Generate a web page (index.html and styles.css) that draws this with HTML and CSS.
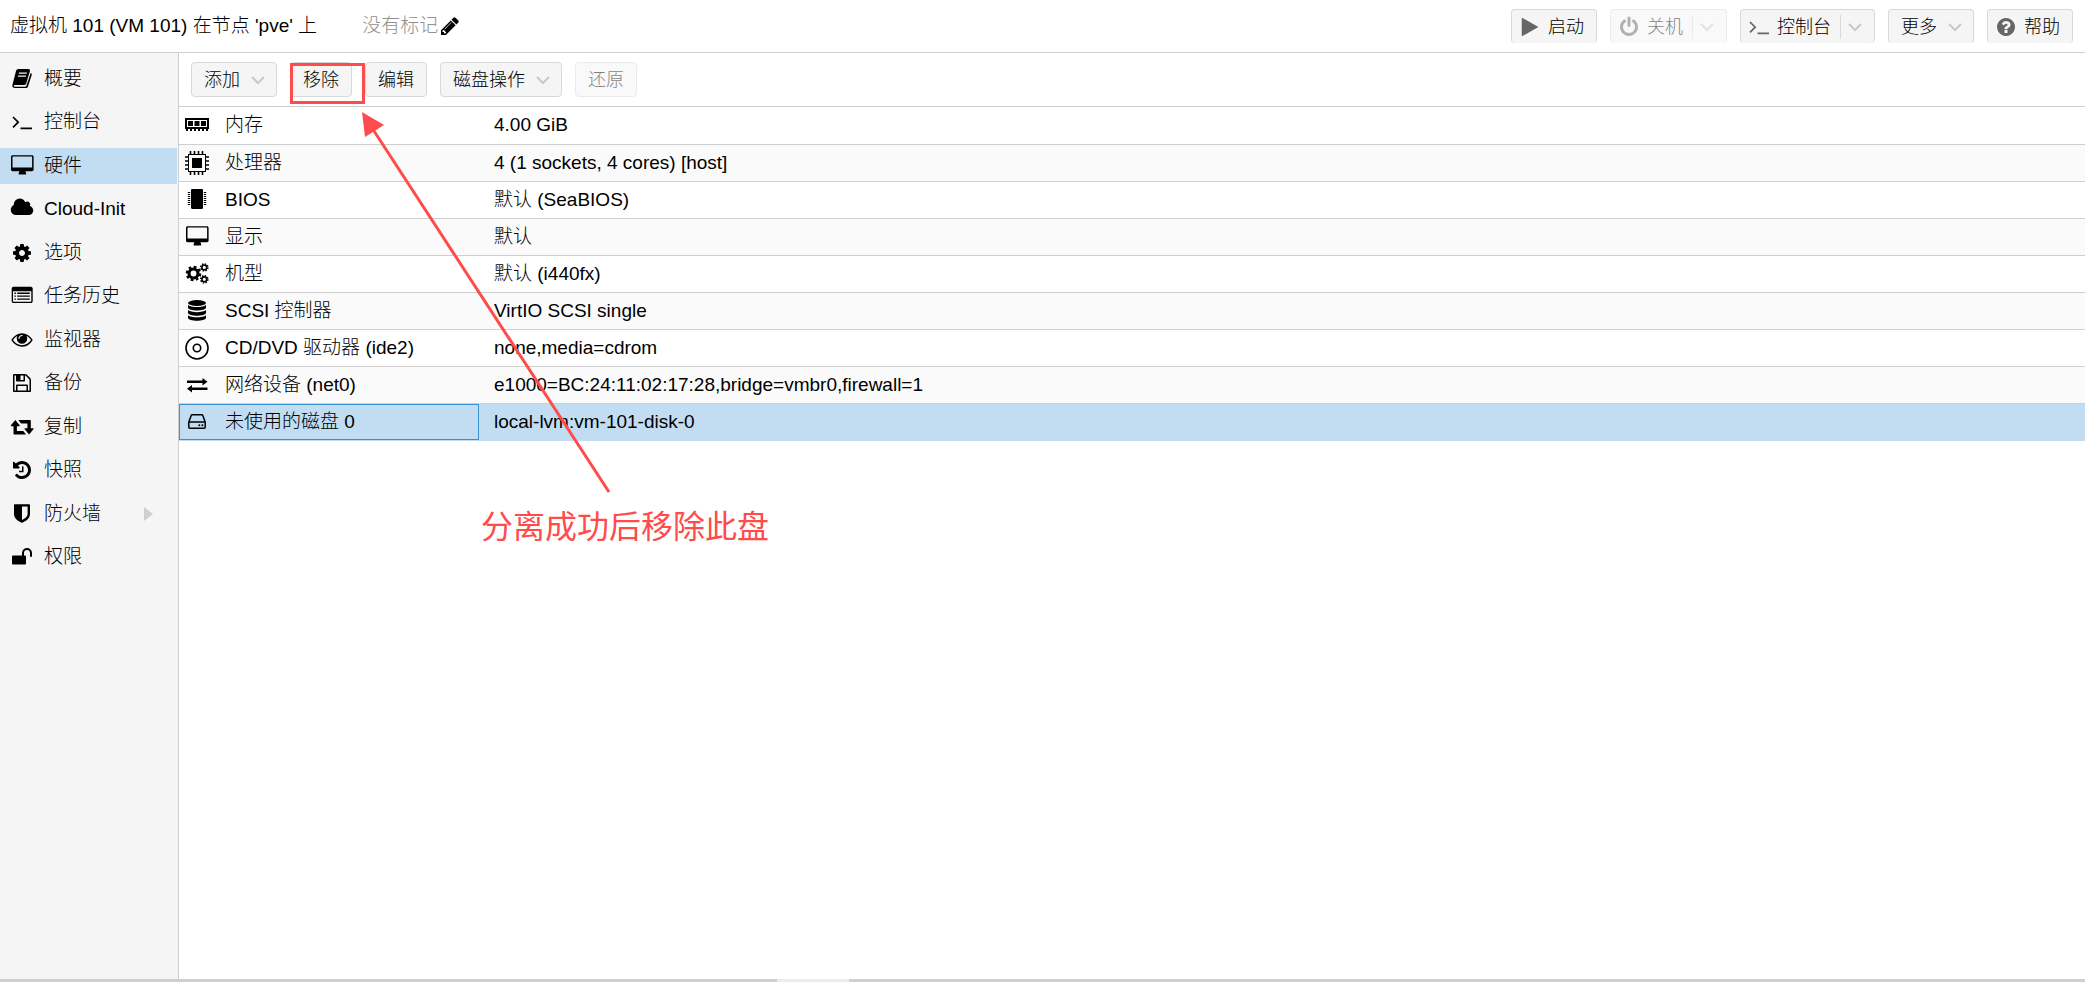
FILE: index.html
```
<!DOCTYPE html>
<html lang="zh-CN">
  <head>
    <meta charset="UTF-8" />
    <meta name="viewport" content="width=device-width, initial-scale=1.0" />
    <title>虚拟机 101 - 硬件</title>
    <link rel="stylesheet" href="styles.css">
  </head>
  <body>
    <svg class="sprite" aria-hidden="true">
      <symbol id="i-pencil" viewBox="-128 -128 2048 2048"><path d="M491 1536l91-91-235-235-91 91v107h128v128h107zm523-928q0-22-22-22-10 0-17 7l-542 542q-7 7-7 17 0 22 22 22 10 0 17-7l542-542q7-7 7-17zm-54-192l416 416-832 832h-416v-416zm683 96q0 53-37 90l-166 166-416-416 166-165q36-38 90-38 53 0 91 38l235 234q37 39 37 91z"/></symbol>
      <symbol id="i-play" viewBox="-128 -128 2048 2048"><path d="M1576 927l-1328 738q-23 13-39.5 3t-16.500-36v-1472q0-26 16.500-36t39.500 3l1328 738q23 13 23 31t-23 31z"/></symbol>
      <symbol id="i-power" viewBox="-128 -128 2048 2048"><path d="M1664 896q0 156-61 298t-164 245-245 164-298 61-298-61-245-164-164-245-61-298q0-182 80.500-343t226.500-270q43-32 95.500-25t83.500 50q32 42 24.500 94.500t-49.500 84.500q-98 74-151.500 181t-53.500 228q0 104 40.500 198.500t109.500 163.500 163.500 109.500 198.500 40.500 198.500-40.500 163.500-109.500 109.500-163.500 40.500-198.500q0-121-53.500-228t-151.500-181q-42-32-49.500-84.500t24.500-94.500q31-43 84-50t95 25q146 109 226.500 270t80.500 343zm-640-768v640q0 52-38 90t-90 38-90-38-38-90v-640q0-52 38-90t90-38 90 38 38 90z"/></symbol>
      <symbol id="i-help" viewBox="-128 -128 2048 2048"><path d="M1024 1376v-192q0-14-9-23t-23-9h-192q-14 0-23 9t-9 23v192q0 14 9 23t23 9h192q14 0 23-9t9-23zm256-672q0-88-55.500-163t-138.500-116-170-41q-243 0-371 213-15 24 8 42l132 100q7 6 19 6 16 0 25-12 53-68 86-92 34-24 86-24 48 0 85.500 26t37.500 59q0 38-20 61t-68 45q-63 28-115.500 86.500t-52.500 125.500v36q0 14 9 23t23 9h192q14 0 23-9t9-23q0-19 21.500-49.500t54.500-49.500q32-18 49-28.500t46-35 44.500-48 28-60.500 12.500-81zm384 192q0 209-103 385.500t-279.500 279.500-385.500 103-385.500-103-279.500-279.500-103-385.500 103-385.500 279.500-279.500 385.500-103 385.500 103 279.500 279.500 103 385.500z"/></symbol>
      <symbol id="i-terminal" viewBox="0 0 24 24"><path d="M3 7l5.200 5.200L3 17.400M10.500 18.300h11.500" fill="none" stroke="currentColor" stroke-width="1.700"/></symbol>
      <symbol id="i-book" viewBox="0 0 24 24"><path fill-rule="evenodd" d="M8.500 2h9.800c1.300 0 2 .9 1.600 2.200L16.200 16.400c-.4 1.200-1.200 1.700-2.400 1.700H5c-.9 0-1.300.5-1 1.100.2.400.6.600 1.200.600h9.700c.7 0 1.300-.4 1.500-1.100L20.700 6c.9.400 1.300 1.100 1 2L18 19.500c-.3 1-1.200 1.600-2.300 1.600H5c-1.700 0-3-1.500-2.600-3.100L6 4c.4-1.300 1.300-2 2.500-2zM9 5.600l-.4 1.200h8l.4-1.200zM8.200 8.500l-.4 1.200h8l.4-1.200z"/></symbol>
      <symbol id="i-desktop" viewBox="0 0 24 24"><path fill-rule="evenodd" d="M2.600 1.200h19.400c.9 0 1.600.7 1.600 1.600v12.800c0 .9-.7 1.600-1.600 1.600h-6.500c0 1.300.7 1.500.7 2.500 0 .5-.4.900-.9.900H9.500c-.5 0-.9-.4-.9-.9 0-1 .7-1.200.7-2.500H2.600c-.9 0-1.600-.7-1.600-1.600V2.800c0-.9.7-1.600 1.600-1.600zM2.500 3v10.400h19.600V3a.4.4 0 0 0-.4-.4H2.900a.4.4 0 0 0-.4.4z"/></symbol>
      <symbol id="i-cloud" viewBox="0 0 2048 2048"><path d="M1984 1152q0 159-112.500 271.500t-271.500 112.500h-1088q-185 0-316.500-131.500t-131.500-316.500q0-132 71-241.500t187-163.500q-2-28-2-43 0-212 150-362t362-150q158 0 286.500 88t187.500 230q70-62 166-62 106 0 181 75t75 181q0 75-41 138 129 30 213 134.500t84 239.500z"/></symbol>
      <symbol id="i-cog" viewBox="-128 -128 2048 2048"><path d="M1152 896q0-106-75-181t-181-75-181 75-75 181 75 181 181 75 181-75 75-181zm512-109v222q0 12-8 23t-20 13l-185 28q-19 54-39 91 35 50 107 138 10 12 10 25t-9 23q-27 37-99 108t-94 71q-12 0-26-9l-138-108q-44 23-91 38-16 136-29 186-7 28-36 28h-222q-14 0-24.500-8.500t-11.500-21.500l-28-184q-49-16-90-37l-141 107q-10 9-25 9-14 0-25-11-126-114-165-168-7-10-7-23 0-12 8-23 15-21 51-66.500t54-70.500q-27-50-41-99l-183-27q-13-2-21-12.500t-8-23.500v-222q0-12 8-23t19-13l186-28q14-46 39-92-40-57-107-138-10-12-10-24 0-10 9-23 26-36 98.500-107.500t94.500-71.500q13 0 26 10l138 107q44-23 91-38 16-136 29-186 7-28 36-28h222q14 0 24.500 8.500t11.500 21.500l28 184q49 16 90 37l142-107q9-9 24-9 13 0 25 10 129 119 165 170 7 8 7 22 0 12-8 23-15 21-51 66.500t-54 70.500q26 50 41 98l183 28q13 2 21 12.500t8 23.500z"/></symbol>
      <symbol id="i-list" viewBox="0 0 24 24"><path fill-rule="evenodd" d="M3.600 2.700h17.200c1 0 1.900.8 1.900 1.900v12.600c0 1-.8 1.800-1.900 1.800H3.600c-1 0-1.900-.8-1.900-1.800V4.600c0-1.100.8-1.900 1.900-1.900zM3 7.300v9.800c0 .4.300.6.600.6h17.100c.4 0 .6-.3.600-.6V7.300zM4.400 8.600h1.500v1.300H4.400zm2.800 0h12.600v1.300H7.200zM4.400 11.500h1.500v1.300H4.400zm2.800 0h12.600v1.300H7.200zM4.400 14.400h1.500v1.300H4.400zm2.800 0h12.600v1.300H7.200z"/></symbol>
      <symbol id="i-eye" viewBox="-128 -64 2048 2048"><path d="M1664 960q-152-236-381-353 61 104 61 225 0 185-131.500 316.500t-316.500 131.500-316.500-131.500-131.500-316.500q0-121 61-225-229 117-381 353 133 205 333.500 326.500t434.500 121.500 434.500-121.500 333.500-326.500zm-720-384q0-20-14-34t-34-14q-125 0-214.500 89.500t-89.500 214.500q0 20 14 34t34 14 34-14 14-34q0-86 61-147t147-61q20 0 34-14t14-34zm848 384q0 34-20 69-140 230-376.500 368.500t-499.500 138.500-499.500-139-376.500-368q-20-35-20-69t20-69q140-229 376.500-368t499.500-139 499.500 139 376.500 368q20 35 20 69z"/></symbol>
      <symbol id="i-save" viewBox="-128 -128 2048 2048"><path d="M512 1536h768v-384h-768v384zm896 0h128v-896q0-14-10-38.500t-20-34.500l-281-281q-10-10-34-20t-39-10v416q0 40-28 68t-68 28h-576q-40 0-68-28t-28-68v-416h-128v1280h128v-416q0-40 28-68t68-28h832q40 0 68 28t28 68v416zm-384-928v-320q0-13-9.500-22.500t-22.500-9.500h-192q-13 0-22.500 9.500t-9.500 22.500v320q0 13 9.500 22.500t22.500 9.500h192q13 0 22.500-9.500t9.500-22.500zm640 32v928q0 40-28 68t-68 28h-1344q-40 0-68-28t-28-68v-1344q0-40 28-68t68-28h928q40 0 88 20t76 48l280 280q28 28 48 76t20 88z"/></symbol>
      <symbol id="i-retweet" viewBox="0 0 24 24"><path d="M5.300 5l4.400 5.300c.3.400.1.900-.4.900H6.900v4.900h6.300l2.500 3c.2.300 0 .5-.3.500H4.300c-.5 0-.8-.3-.8-.8v-7.600H1.300c-.5 0-.7-.5-.4-.9zM19.100 19.500l-4.400-5.300c-.3-.4-.1-.9.400-.9h2.300V8.400h-6.300l-2.500-3c-.2-.3 0-.5.300-.5h11.100c.5 0 .8.300.8.800v7.600H23c.5 0 .7.500.4.900z"/></symbol>
      <symbol id="i-history" viewBox="-128 -128 2048 2048"><path d="M1664 896q0 156-61 298t-164 245-245 164-298 61q-172 0-327-72.500t-264-204.500q-7-10-6.500-22.500t8.500-20.500l137-138q10-9 25-9 16 2 23 12 73 95 179 147t225 52q104 0 198.500-40.500t163.500-109.500 109.500-163.500 40.500-198.500-40.500-198.500-109.500-163.500-163.500-109.500-198.500-40.500q-98 0-188 35.500t-160 101.500l137 138q31 30 14 69-17 40-59 40h-448q-26 0-45-19t-19-45v-448q0-42 40-59 39-17 69 14l130 129q107-101 244.500-156.500t284.500-55.500q156 0 298 61t245 164 164 245 61 298zm-640-288v448q0 14-9 23t-23 9h-320q-14 0-23-9t-9-23v-64q0-14 9-23t23-9h224v-352q0-14 9-23t23-9h64q14 0 23 9t9 23z"/></symbol>
      <symbol id="i-shield" viewBox="0 0 24 24"><path fill-rule="evenodd" d="M4.800 2.200h14.400c.4 0 .8.400.8.800v9c0 4.600-4 7-7.700 8.700h-.6C8 19 4 16.600 4 12V3c0-.4.400-.8.800-.8zM12 4.500v13.400c3-1.500 5.600-3.300 5.600-6V4.500z"/></symbol>
      <symbol id="i-unlock" viewBox="0 0 24 24"><path d="M3.300 10.500h11.400c.8 0 1.300.5 1.300 1.300v6.400c0 .8-.5 1.300-1.300 1.300H3.300c-.8 0-1.300-.5-1.300-1.300v-6.400c0-.8.500-1.300 1.300-1.300z"/><path d="M13 11V8a4 4 0 0 1 8 0v3" fill="none" stroke="currentColor" stroke-width="2" stroke-linecap="round"/></symbol>
      <symbol id="i-memory" viewBox="0 0 24 24"><path fill-rule="evenodd" d="M0 5h24v11h-1v2h-2v-2h-2v2h-2v-2h-2v2h-2v-2h-2v2H9v-2H7v2H5v-2H3v2H1v-2H0zM2 7v7h20V7zM3 8h5v5H3zm6.500 0h5v5h-5zm6.500 0h5v5h-5z"/></symbol>
      <symbol id="i-cpu" viewBox="0 0 24 24"><path fill-rule="evenodd" d="M3 3h18v18H3zM4 4v16h16V4zM7 7h10v10H7z"/><path d="M5.500 0v3M9.500 0v3M13.500 0v3M17.500 0v3M5.500 21v3M9.500 21v3M13.500 21v3M17.500 21v3M0 6h3M0 10h3M0 14h3M0 18h3M21 6h3M21 10h3M21 14h3M21 18h3" fill="none" stroke="currentColor" stroke-width="1.600"/></symbol>
      <symbol id="i-chip" viewBox="0 0 24 24"><path d="M7.200 1h9.600c.7 0 1.200.5 1.200 1.200v17.600c0 .7-.5 1.200-1.200 1.200H7.200c-.7 0-1.200-.5-1.200-1.200V2.200C6 1.500 6.500 1 7.200 1z"/><path d="M4 4v14M20 4v14" fill="none" stroke="currentColor" stroke-width="2.400" stroke-dasharray="1 1"/></symbol>
      <symbol id="i-cogs" viewBox="0 0 24 24"><g fill="none" stroke="currentColor"><circle cx="8.500" cy="11.500" r="4.500" stroke-width="3.200"/><circle cx="8.500" cy="11.500" r="6.700" stroke-width="2.200" stroke-dasharray="2.830 2.430"/><circle cx="19.300" cy="5.400" r="2.400" stroke-width="1.600"/><circle cx="19.300" cy="5.400" r="3.600" stroke-width="1.400" stroke-dasharray="1.530 1.300"/><circle cx="19.300" cy="17.300" r="2.400" stroke-width="1.600"/><circle cx="19.300" cy="17.300" r="3.600" stroke-width="1.400" stroke-dasharray="1.530 1.300"/></g></symbol>
      <symbol id="i-database" viewBox="0 0 24 24"><ellipse cx="12" cy="4" rx="9" ry="3"/><path d="M3 6c3 2.800 15 2.800 18 0v2.600c0 4-18 4-18 0zM3 11.100c3 2.800 15 2.800 18 0v2.600c0 4-18 4-18 0zM3 16.200c3 2.800 15 2.800 18 0v2.600c0 4-18 4-18 0z"/></symbol>
      <symbol id="i-disc" viewBox="0 0 24 24"><g fill="none" stroke="currentColor" stroke-width="1.600"><circle cx="12" cy="12" r="11"/><circle cx="12" cy="12" r="3.700"/></g></symbol>
      <symbol id="i-exchange" viewBox="0 0 24 24"><path d="M2 7.400h15.500V5l5 3.800-5 3.700v-2.400H2zM22.500 14.400H7V12l-5 3.800 5 3.700v-2.400h15.500z"/></symbol>
      <symbol id="i-hdd" viewBox="0 0 24 24"><path d="M3.800 12L6.200 5.500q.3-.7 1-.7h9.600q.7 0 1 .7L20.200 12M3.800 12.100h16.400v5.200q0 1-1 1H4.800q-1 0-1-1z" fill="none" stroke="currentColor" stroke-width="1.500" stroke-linejoin="round"/><circle cx="14.300" cy="15.200" r="1"/><circle cx="17.400" cy="15.200" r="1"/></symbol>
      <symbol id="i-down" viewBox="0 0 14 14"><path d="M1 4l6 6 6-6" fill="none" stroke="currentColor" stroke-width="2"/></symbol>
    </svg>

    <header class="header">
      <h1 class="title">虚拟机 101 (VM 101) 在节点 'pve' 上</h1>
      <div class="tags">
        <span>没有标记</span>
        <button class="edit-tags" aria-label="编辑标记"><svg class="icon"><use href="#i-pencil"/></svg></button>
      </div>
      <div class="actions">
        <button class="btn"><svg class="icon"><use href="#i-play"/></svg>启动</button>
        <button class="btn" disabled><svg class="icon"><use href="#i-power"/></svg>关机<span class="drop"><svg class="arrow"><use href="#i-down"/></svg></span></button>
        <button class="btn"><svg class="icon"><use href="#i-terminal"/></svg>控制台<span class="drop"><svg class="arrow"><use href="#i-down"/></svg></span></button>
        <button class="btn">更多<svg class="arrow"><use href="#i-down"/></svg></button>
        <button class="btn"><svg class="icon"><use href="#i-help"/></svg>帮助</button>
      </div>
    </header>

    <div class="content">
      <nav class="sidebar">
        <a href="#" class="item"><svg class="icon"><use href="#i-book"/></svg>概要</a>
        <a href="#" class="item"><svg class="icon"><use href="#i-terminal"/></svg>控制台</a>
        <a href="#" class="item selected"><svg class="icon"><use href="#i-desktop"/></svg>硬件</a>
        <a href="#" class="item"><svg class="icon"><use href="#i-cloud"/></svg>Cloud-Init</a>
        <a href="#" class="item"><svg class="icon"><use href="#i-cog"/></svg>选项</a>
        <a href="#" class="item"><svg class="icon"><use href="#i-list"/></svg>任务历史</a>
        <a href="#" class="item"><svg class="icon"><use href="#i-eye"/></svg>监视器</a>
        <a href="#" class="item"><svg class="icon"><use href="#i-save"/></svg>备份</a>
        <a href="#" class="item"><svg class="icon"><use href="#i-retweet"/></svg>复制</a>
        <a href="#" class="item"><svg class="icon"><use href="#i-history"/></svg>快照</a>
        <a href="#" class="item has-children"><svg class="icon"><use href="#i-shield"/></svg>防火墙</a>
        <a href="#" class="item"><svg class="icon"><use href="#i-unlock"/></svg>权限</a>
      </nav>

      <main class="main">
        <div class="toolbar">
          <button class="btn">添加<svg class="arrow"><use href="#i-down"/></svg></button>
          <button class="btn">移除</button>
          <button class="btn">编辑</button>
          <button class="btn">磁盘操作<svg class="arrow"><use href="#i-down"/></svg></button>
          <button class="btn" disabled>还原</button>
        </div>

        <table class="hardware">
          <tbody>
            <tr><th scope="row"><div class="cell"><svg class="icon"><use href="#i-memory"/></svg>内存</div></th><td>4.00 GiB</td></tr>
            <tr><th scope="row"><div class="cell"><svg class="icon"><use href="#i-cpu"/></svg>处理器</div></th><td>4 (1 sockets, 4 cores) [host]</td></tr>
            <tr><th scope="row"><div class="cell"><svg class="icon"><use href="#i-chip"/></svg>BIOS</div></th><td>默认 (SeaBIOS)</td></tr>
            <tr><th scope="row"><div class="cell"><svg class="icon"><use href="#i-desktop"/></svg>显示</div></th><td>默认</td></tr>
            <tr><th scope="row"><div class="cell"><svg class="icon"><use href="#i-cogs"/></svg>机型</div></th><td>默认 (i440fx)</td></tr>
            <tr><th scope="row"><div class="cell"><svg class="icon"><use href="#i-database"/></svg>SCSI 控制器</div></th><td>VirtIO SCSI single</td></tr>
            <tr><th scope="row"><div class="cell"><svg class="icon"><use href="#i-disc"/></svg>CD/DVD 驱动器 (ide2)</div></th><td>none,media=cdrom</td></tr>
            <tr><th scope="row"><div class="cell"><svg class="icon"><use href="#i-exchange"/></svg>网络设备 (net0)</div></th><td>e1000=BC:24:11:02:17:28,bridge=vmbr0,firewall=1</td></tr>
            <tr class="selected"><th scope="row"><div class="cell"><svg class="icon"><use href="#i-hdd"/></svg>未使用的磁盘 0</div></th><td>local-lvm:vm-101-disk-0</td></tr>
          </tbody>
        </table>

        <!-- callout over the remove button -->
        <div class="callout">
          <svg class="callout-lines" viewBox="0 0 440 450">
            <rect x="112.500" y="11.500" width="72" height="38" fill="none" stroke="currentColor" stroke-width="3"/>
            <path d="M430 439L195 78" fill="none" stroke="currentColor" stroke-width="3"/>
            <path d="M183 59l22 13-19 12z"/>
          </svg>
          <p class="callout-text">分离成功后移除此盘</p>
        </div>
      </main>
    </div>

    <footer class="splitter"><span class="handle"></span></footer>
  </body>
</html>
```

FILE: styles.css
```
* {
    box-sizing: border-box;
}

body {
    margin: 0;
    height: 100vh;
    display: flex;
    flex-direction: column;
    font-family: "Liberation Sans", "Noto Sans CJK SC", sans-serif;
    font-size: 19px;
    font-weight: 300;
    line-height: 24px;
    color: #000;
    background-color: #fff;
}

.sprite {
    display: none;
}

.icon {
    width: 24px;
    height: 24px;
    flex: none;
    fill: currentColor;
}

.arrow {
    width: 14px;
    height: 14px;
    margin: 0 -1px 0 11px;
    color: #c8c8c8;
}

/* header */
.header {
    display: flex;
    align-items: center;
    height: 53px;
    padding: 0 12px 0 10px;
    border-bottom: 1px solid #cfcfcf;
}

.title {
    margin: 0;
    font-size: inherit;
    font-weight: inherit;
}

.tags {
    display: flex;
    align-items: center;
    margin-left: 45px;
    color: #909090;
}

.edit-tags {
    display: flex;
    padding: 0;
    border: none;
    background: none;
    color: #000;
}

.actions {
    display: flex;
    gap: 13px;
    margin-left: auto;
}

.btn {
    display: flex;
    align-items: center;
    height: 35px;
    padding: 0 12px;
    border: 1px solid #d8d8d8;
    border-radius: 4px;
    background-color: #f5f5f5;
    color: #000;
    font: inherit;
    font-size: 18px;
    white-space: nowrap;
}

.btn:disabled {
    opacity: 0.5;
}

.actions .btn {
    height: 34px;
    border-bottom: none;
}

.btn .icon {
    margin: 0 6px 0 -6px;
    color: #666;
}

.drop {
    display: flex;
    align-items: center;
    height: 24px;
    margin-left: 9px;
    border-left: 1px solid #d8d8d8;
}

.drop .arrow {
    margin: 0 0 0 7px;
}

/* content */
.content {
    flex: 1;
    display: flex;
    min-height: 0;
}

.sidebar {
    width: 179px;
    flex: none;
    padding: 8px 1px 0 0;
    border-right: 1px solid #cfcfcf;
    background-color: #f5f5f5;
}

.item {
    display: flex;
    align-items: center;
    gap: 10px;
    height: 36px;
    margin-bottom: 7px;
    padding-left: 10px;
    color: #000;
    text-decoration: none;
}

.item:nth-child(even) {
    margin-bottom: 8px;
}

.item.selected {
    background-color: #c2ddf2;
}

.has-children::after {
    content: "";
    margin: 0 24px 0 auto;
    border-left: 9px solid #cfcfcf;
    border-top: 7px solid transparent;
    border-bottom: 7px solid transparent;
}

.main {
    flex: 1;
    position: relative;
    min-width: 0;
}

.toolbar {
    display: flex;
    align-items: center;
    gap: 13px;
    height: 54px;
    padding: 0 12px;
    border-bottom: 1px solid #cfcfcf;
}

/* hardware table */
.hardware {
    width: 100%;
    border-collapse: collapse;
    table-layout: fixed;
}

.hardware tr {
    height: 37px;
    border-bottom: 1px solid #cfcfcf;
}

.hardware tr:nth-child(even) {
    background-color: #fafafa;
}

.hardware th {
    width: 300px;
    padding: 0;
    font-weight: inherit;
    text-align: left;
}

.hardware td {
    padding: 0 15px;
}

.cell {
    display: flex;
    align-items: center;
    gap: 16px;
    height: 36px;
    padding-left: 6px;
}

.hardware .selected {
    background-color: #c2ddf2;
    border-color: #c2ddf2;
}

.selected .cell {
    padding-left: 5px;
    border: 1px solid #3892d4;
}

/* callout */
.callout {
    position: absolute;
    top: 0;
    left: 0;
    color: #ff4b4b;
    pointer-events: none;
}

.callout-lines {
    display: block;
    width: 440px;
    height: 450px;
    fill: currentColor;
}

.callout-text {
    margin: 0 0 0 302px;
    font-size: 32px;
    font-weight: 400;
    line-height: 48px;
    white-space: nowrap;
}

.splitter {
    display: flex;
    justify-content: center;
    height: 3px;
    background-color: #cfcfcf;
}

.handle {
    width: 72px;
    margin-right: 459px;
    background-color: #ececec;
}
```
